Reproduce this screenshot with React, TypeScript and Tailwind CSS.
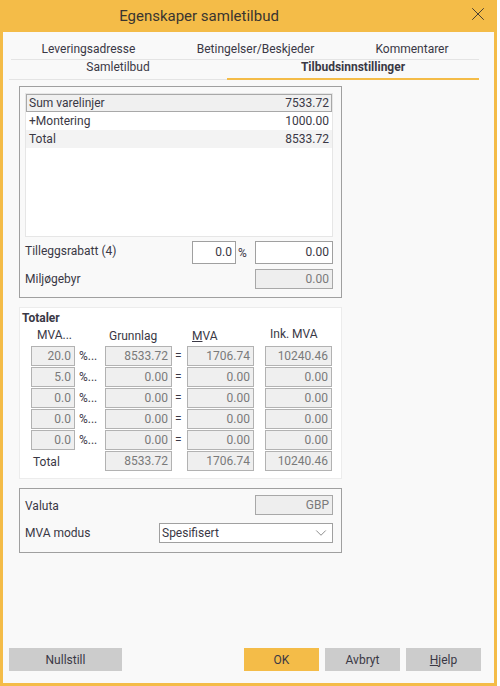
import React from 'react';
import { X, ChevronDown } from 'lucide-react';

const font = { fontFamily: 'Roboto, "Liberation Sans", Arial, sans-serif' };

const listRows = [
  { label: 'Sum varelinjer', value: '7533.72', cls: 'bg-[#f0f0f0] border border-[#a8a8a8]' },
  { label: '+Montering', value: '1000.00', cls: 'bg-white border border-white' },
  { label: 'Total', value: '8533.72', cls: 'bg-[#f3f3f3] border border-[#f3f3f3]' },
];

const vatRows = [
  { rate: '20.0', base: '8533.72', vat: '1706.74', inc: '10240.46' },
  { rate: '5.0', base: '0.00', vat: '0.00', inc: '0.00' },
  { rate: '0.0', base: '0.00', vat: '0.00', inc: '0.00' },
  { rate: '0.0', base: '0.00', vat: '0.00', inc: '0.00' },
  { rate: '0.0', base: '0.00', vat: '0.00', inc: '0.00' },
];

const Cell = ({ children }: { children: React.ReactNode }) => (
  <div className="h-[20px] bg-[#efefef] border border-[#b2b2b2] text-right pr-[3px] leading-[18px] text-[#7a7a7a]">
    {children}
  </div>
);

const Btn = ({ label, primary, w }: { label: React.ReactNode; primary?: boolean; w: string }) => (
  <button
    className={`h-[23px] ${w} text-[12px] text-[#3a3845] ${primary ? 'bg-[#f4bc48]' : 'bg-[#cccccc]'}`}
  >
    {label}
  </button>
);

const App: React.FC = () => {
  return (
    <div style={font} className="w-[500px] h-[686px] text-[12px] text-[#3a3845] bg-white">
      <div className="w-[497px] h-[686px] flex flex-col bg-[#f9f9f9] border-x-[3px] border-b-[3px] border-[#f4bc48]">
        {/* Title bar */}
        <div className="h-[32px] bg-[#f4bc48] flex items-center -mx-[3px] shrink-0">
          <div className="flex-1 text-center text-[15px] pr-[69px] text-[#3a3530]">Egenskaper samletilbud</div>
          <X size={22} strokeWidth={1} className="mr-[8px] -mt-[4px] text-[#3a3530]" />
        </div>

        {/* Tabs */}
        <div className="pt-[8px] shrink-0">
          <div className="flex ml-[8px] w-[468px] h-[18px] items-center border-b border-[#e4e4e4] pb-[1px] box-content">
            <div className="w-[155px] text-center">Leveringsadresse</div>
            <div className="w-[179px] text-center">Betingelser/Beskjeder</div>
            <div className="w-[134px] text-center">Kommentarer</div>
          </div>
          <div className="flex ml-[6px] w-[470px] h-[20px] items-end">
            <div className="w-[218px] text-center border-b border-[#e4e4e4] pb-[3px]">Samletilbud</div>
            <div className="w-[252px] text-center font-bold border-b-2 border-[#f4bc48] pb-[2px]">Tilbudsinnstillinger</div>
          </div>
        </div>

        {/* Summary panel */}
        <div className="ml-[16px] mt-[6px] w-[323px] h-[212px] border border-[#a0a0a0] pl-[5px] pr-[8px] pt-[6px] shrink-0">
          <div className="h-[144px] bg-white border border-[#e6e6e6]">
            {listRows.map((r) => (
              <div key={r.label} className={`h-[18px] flex items-center justify-between px-[2px] ${r.cls}`}>
                <span>{r.label}</span>
                <span>{r.value}</span>
              </div>
            ))}
          </div>
          <div className="flex items-center mt-[4px] h-[23px]">
            <span className="flex-1 -mt-[4px]">Tilleggsrabatt (4)</span>
            <div className="w-[44px] h-[23px] bg-white border border-[#a0a0a0] text-right pr-[3px] leading-[21px]">0.0</div>
            <span className="w-[19px] pl-[2px]">%</span>
            <div className="w-[78px] h-[23px] bg-white border border-[#a0a0a0] text-right pr-[3px] leading-[21px]">0.00</div>
          </div>
          <div className="flex items-center mt-[5px] h-[20px]">
            <span className="flex-1 -mt-[1px]">Miljøgebyr</span>
            <div className="w-[78px] h-[20px] bg-[#eeeeee] border border-[#a8a8a8] text-right pr-[3px] leading-[18px] text-[#7a7a7a]">0.00</div>
          </div>
        </div>

        {/* Totaler panel */}
        <div className="ml-[16px] mt-[9px] w-[323px] h-[172px] bg-white border border-[#ececec] shrink-0">
          <div className="font-bold pl-[2px] pt-[1px] h-[18px]">Totaler</div>
          <div className="pl-[11px] grid grid-cols-[44px_30px_67px_15px_67px_11px_67px] gap-y-[1px]">
            <div className="h-[19px] pl-[6px] text-[#3a3845]">MVA...</div>
            <div />
            <div className="h-[19px] pl-[4px] pt-[1px]">Grunnlag</div>
            <div />
            <div className="h-[19px] pl-[5px] pt-[1px]">
              <span className="underline">M</span>VA
            </div>
            <div />
            <div className="h-[19px] pl-[5px] -mt-[1px]">Ink. MVA</div>
            {vatRows.map((r, i) => (
              <React.Fragment key={i}>
                <Cell>{r.rate}</Cell>
                <div className="pl-[4px] leading-[20px]">%...</div>
                <Cell>{r.base}</Cell>
                <div className="pl-[3px] leading-[20px]">=</div>
                <Cell>{r.vat}</Cell>
                <div />
                <Cell>{r.inc}</Cell>
              </React.Fragment>
            ))}
            <div className="pl-[2px] leading-[22px]">Total</div>
            <div />
            <Cell>8533.72</Cell>
            <div />
            <Cell>1706.74</Cell>
            <div />
            <Cell>10240.46</Cell>
          </div>
        </div>

        {/* Valuta panel */}
        <div className="ml-[16px] mt-[9px] w-[323px] h-[65px] border border-[#a0a0a0] pl-[5px] pr-[8px] pt-[6px] shrink-0">
          <div className="flex items-center h-[20px]">
            <span className="flex-1 pt-[2px]">Valuta</span>
            <div className="w-[78px] h-[20px] bg-[#eeeeee] border border-[#a8a8a8] text-right pr-[3px] leading-[18px] text-[#7a7a7a]">GBP</div>
          </div>
          <div className="flex items-center h-[20px] mt-[8px]">
            <span className="flex-1">MVA modus</span>
            <div className="w-[174px] h-[20px] bg-white border border-[#a0a0a0] flex items-center justify-between pl-[2px] pr-[2px]">
              <span>Spesifisert</span>
              <ChevronDown size={18} strokeWidth={0.9} className="text-[#555]" />
            </div>
          </div>
        </div>

        <div className="flex-1" />

        {/* Buttons */}
        <div className="flex items-center pl-[6px] pr-[13px] pb-[12px] shrink-0">
          <Btn label="Nullstill" w="w-[113px]" />
          <div className="flex-1" />
          <div className="flex gap-[6px]">
            <Btn label="OK" primary w="w-[75px]" />
            <Btn label="Avbryt" w="w-[75px]" />
            <Btn label={<><span className="underline">H</span>jelp</>} w="w-[75px]" />
          </div>
        </div>
      </div>
    </div>
  );
};

export default App;
